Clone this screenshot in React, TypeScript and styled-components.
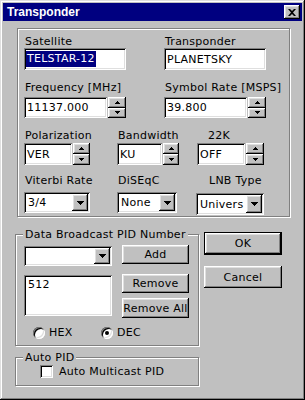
import React from "react";
import styled, { createGlobalStyle, css } from "styled-components";

const GlobalStyle = createGlobalStyle`
  html, body { margin: 0; padding: 0; background: #c0c0c0; }
  body {
    font-family: "DejaVu Sans", "Liberation Sans", sans-serif;
    font-size: 11px;
    letter-spacing: 0.25px;
    color: #000;
  }
  * { box-sizing: border-box; }
`;

const sunken = css`
  background: #fff;
  box-shadow: inset 1px 1px #808080, inset -1px -1px #fff, inset 2px 2px #000, inset -2px -2px #dfdfdf;
`;

const raised = css`
  background: #c0c0c0;
  box-shadow: inset -1px -1px #000, inset 1px 1px #fff, inset -2px -2px #808080, inset 2px 2px #dfdfdf;
`;

const Window = styled.div`
  width: 305px;
  height: 400px;
  padding: 3px;
  background: #c0c0c0;
  box-shadow: inset -1px -1px #000, inset 1px 1px #dfdfdf, inset -2px -2px #808080, inset 2px 2px #fff;
  display: flex;
  flex-direction: column;
`;

const TitleBar = styled.div`
  height: 18px;
  background: #000080;
  color: #fff;
  display: flex;
  align-items: center;
  justify-content: space-between;
  padding: 0 2px 0 4px;
`;

const Title = styled.span`
  font-family: "Liberation Sans", Arial, sans-serif;
  font-weight: bold;
  font-size: 12px;
  letter-spacing: 0;
`;

const CloseBtn = styled.div`
  ${raised};
  width: 16px;
  height: 14px;
  display: flex;
  align-items: center;
  justify-content: center;
`;

const Body = styled.div`
  padding: 7px 0 0 12px;
`;

const TopGroup = styled.div`
  width: 273px;
  margin-left: 2px;
  border: 1px solid #808080;
  box-shadow: inset 1px 1px #fff, 1px 1px #fff;
  padding: 6px 0 1px 6px;
`;

const Row = styled.div<{ $mt?: number }>`
  display: flex;
  align-items: flex-start;
  margin-top: ${p => p.$mt ?? 0}px;
`;

const Field = styled.div<{ $w?: number }>`
  display: flex;
  flex-direction: column;
  width: ${p => (p.$w ? `${p.$w}px` : "auto")};
`;

const Label = styled.div<{ $pl?: number; $gap?: number }>`
  line-height: 13px;
  padding-left: ${p => p.$pl ?? 1}px;
  margin-bottom: ${p => p.$gap ?? 0}px;
  white-space: nowrap;
`;

const Edit = styled.div<{ $w: number; $h: number }>`
  ${sunken};
  width: ${p => p.$w}px;
  height: ${p => p.$h}px;
  padding: 0 3px;
  display: flex;
  align-items: center;
  white-space: nowrap;
  line-height: 13px;
`;

const Selected = styled.span`
  background: #000080;
  color: #fff;
  line-height: 16px;
  margin-left: -1px;
  padding: 0 1px;
`;

const SpinWrap = styled.div`
  display: flex;
  gap: 1px;
`;

const Spinner = styled.div<{ $w: number }>`
  width: ${p => p.$w}px;
  display: flex;
  flex-direction: column;
`;

const SpinBtn = styled.div`
  ${raised};
  flex: 1;
  display: flex;
  align-items: center;
  justify-content: center;
`;

const Combo = styled.div<{ $w: number; $h: number; $mt?: number }>`
  ${sunken};
  width: ${p => p.$w}px;
  height: ${p => p.$h}px;
  margin-top: ${p => p.$mt ?? 0}px;
  padding: 2px;
  display: flex;
`;

const ComboText = styled.div`
  flex: 1;
  padding-left: 2px;
  display: flex;
  align-items: center;
  overflow: hidden;
  white-space: nowrap;
`;

const DropBtn = styled.div`
  ${raised};
  width: 16px;
  display: flex;
  align-items: center;
  justify-content: center;
`;

const Bottom = styled.div`
  display: flex;
  align-items: flex-start;
  gap: 5px;
  margin-top: 16px;
`;

const LeftCol = styled.div`
  width: 184px;
  display: flex;
  flex-direction: column;
`;

const GroupBox = styled.div<{ $mt?: number; $pad: string }>`
  position: relative;
  margin-top: ${p => p.$mt ?? 0}px;
  border: 1px solid #808080;
  box-shadow: inset 1px 1px #fff, 1px 1px #fff;
  padding: ${p => p.$pad};
`;

const Legend = styled.span`
  position: absolute;
  top: -7px;
  left: 7px;
  padding: 0 2px 0 2px;
  line-height: 13px;
  background: #c0c0c0;
  white-space: nowrap;
`;

const PidGrid = styled.div`
  display: grid;
  grid-template-columns: 88px 67px;
  column-gap: 10px;
  row-gap: 8px;
`;

const Stack = styled.div<{ $gap: number }>`
  display: flex;
  flex-direction: column;
  gap: ${p => p.$gap}px;
`;

const Button = styled.div<{ $w: number; $h: number; $default?: boolean }>`
  ${raised};
  width: ${p => p.$w}px;
  height: ${p => p.$h}px;
  display: flex;
  align-items: center;
  justify-content: center;
  white-space: nowrap;
  ${p =>
    p.$default &&
    css`
      border: 1px solid #000;
    `}
`;

const ListBox = styled.div`
  ${sunken};
  height: 41px;
  margin-top: 1px;
  padding: 3px 4px;
  line-height: 13px;
`;

const RadioRow = styled.div`
  display: flex;
  align-items: center;
  padding-left: 9px;
  margin-top: 8px;
`;

const RadioItem = styled.div<{ $w?: number }>`
  display: flex;
  align-items: center;
  gap: 4px;
  width: ${p => (p.$w ? `${p.$w}px` : "auto")};
  line-height: 13px;
`;

const Radio = styled.span<{ $on?: boolean }>`
  width: 12px;
  height: 12px;
  border-radius: 50%;
  background: #fff;
  box-shadow: inset 1px 1px #808080, inset -1px -1px #fff, inset 2px 2px #000, inset -2px -2px #dfdfdf;
  display: flex;
  align-items: center;
  justify-content: center;
  &::after {
    content: "";
    display: ${p => (p.$on ? "block" : "none")};
    width: 4px;
    height: 4px;
    border-radius: 50%;
    background: #000;
  }
`;

const CheckRow = styled.div`
  display: flex;
  align-items: center;
  gap: 6px;
  line-height: 13px;
`;

const CheckBox = styled.span`
  ${sunken};
  width: 13px;
  height: 13px;
`;

const RightCol = styled.div`
  display: flex;
  flex-direction: column;
  gap: 11px;
  margin-top: -1px;
`;

const UpArrow = () => (
  <svg width="5" height="3" viewBox="0 0 5 3">
    <rect x="2" y="0" width="1" height="1" />
    <rect x="1" y="1" width="3" height="1" />
    <rect x="0" y="2" width="5" height="1" />
  </svg>
);

const DownArrow = ({ size = 5 }: { size?: number }) => {
  const rows = Math.ceil(size / 2);
  return (
    <svg width={size} height={rows} viewBox={`0 0 ${size} ${rows}`}>
      {Array.from({ length: rows }).map((_, i) => (
        <rect key={i} x={i} y={i} width={size - i * 2} height="1" />
      ))}
    </svg>
  );
};

const Spin = ({ value, w, h, sw = 17 }: { value: string; w: number; h: number; sw?: number }) => (
  <SpinWrap>
    <Edit $w={w} $h={h}>{value}</Edit>
    <Spinner $w={sw}>
      <SpinBtn><UpArrow /></SpinBtn>
      <SpinBtn><DownArrow /></SpinBtn>
    </Spinner>
  </SpinWrap>
);

const Drop = ({ value, w, h, mt }: { value: string; w: number; h: number; mt?: number }) => (
  <Combo $w={w} $h={h} $mt={mt}>
    <ComboText>{value}</ComboText>
    <DropBtn><DownArrow size={7} /></DropBtn>
  </Combo>
);

export default function App() {
  return (
    <>
      <GlobalStyle />
      <Window>
        <TitleBar>
          <Title>Transponder</Title>
          <CloseBtn>
            <svg width="8" height="7" viewBox="0 0 8 7">
              <path d="M0 0h2l2 2 2-2h2L5 3.5 8 7H6L4 5 2 7H0l3-3.5z" />
            </svg>
          </CloseBtn>
        </TitleBar>
        <Body>
          <TopGroup>
            <Row>
              <Field $w={140}>
                <Label>Satellite</Label>
                <Edit $w={102} $h={22}><Selected>TELSTAR-12</Selected></Edit>
              </Field>
              <Field>
                <Label>Transponder</Label>
                <Edit $w={102} $h={22}>PLANETSKY</Edit>
              </Field>
            </Row>
            <Row $mt={11}>
              <Field $w={140}>
                <Label $gap={3}>Frequency [MHz]</Label>
                <Spin value="11137.000" w={83} h={21} sw={18} />
              </Field>
              <Field>
                <Label $gap={3}>Symbol Rate [MSPS]</Label>
                <Spin value="39.800" w={83} h={21} sw={18} />
              </Field>
            </Row>
            <Row $mt={11}>
              <Field $w={93}>
                <Label $gap={1}>Polarization</Label>
                <Spin value="VER" w={48} h={22} />
              </Field>
              <Field $w={80}>
                <Label $gap={1}>Bandwidth</Label>
                <Spin value="KU" w={45} h={22} sw={16} />
              </Field>
              <Field>
                <Label $gap={1} $pl={11}>22K</Label>
                <Spin value="OFF" w={48} h={22} sw={18} />
              </Field>
            </Row>
            <Row $mt={9}>
              <Field $w={93}>
                <Label $gap={5}>Viterbi Rate</Label>
                <Drop value="3/4" w={66} h={21} />
              </Field>
              <Field $w={79}>
                <Label $gap={5}>DiSEqC</Label>
                <Drop value="None" w={60} h={21} />
              </Field>
              <Field>
                <Label $gap={5} $pl={13}>LNB Type</Label>
                <Drop value="Univers" w={68} h={22} mt={1} />
              </Field>
            </Row>
          </TopGroup>
          <Bottom>
            <LeftCol>
              <GroupBox $mt={1} $pad="10px 0 6px 8px">
                <Legend>Data Broadcast PID Number</Legend>
                <PidGrid>
                  <Drop value="" w={88} h={20} mt={1} />
                  <Button $w={67} $h={19}>Add</Button>
                  <ListBox>512</ListBox>
                  <Stack $gap={5}>
                    <Button $w={67} $h={19}>Remove</Button>
                    <Button $w={67} $h={20}>Remove All</Button>
                  </Stack>
                </PidGrid>
                <RadioRow>
                  <RadioItem $w={68}>
                    <Radio />
                    HEX
                  </RadioItem>
                  <RadioItem>
                    <Radio $on />
                    DEC
                  </RadioItem>
                </RadioRow>
              </GroupBox>
              <GroupBox $mt={11} $pad="7px 0 7px 24px">
                <Legend>Auto PID</Legend>
                <CheckRow>
                  <CheckBox />
                  Auto Multicast PID
                </CheckRow>
              </GroupBox>
            </LeftCol>
            <RightCol>
              <Button $w={78} $h={23} $default>OK</Button>
              <Button $w={78} $h={22}>Cancel</Button>
            </RightCol>
          </Bottom>
        </Body>
      </Window>
    </>
  );
}
